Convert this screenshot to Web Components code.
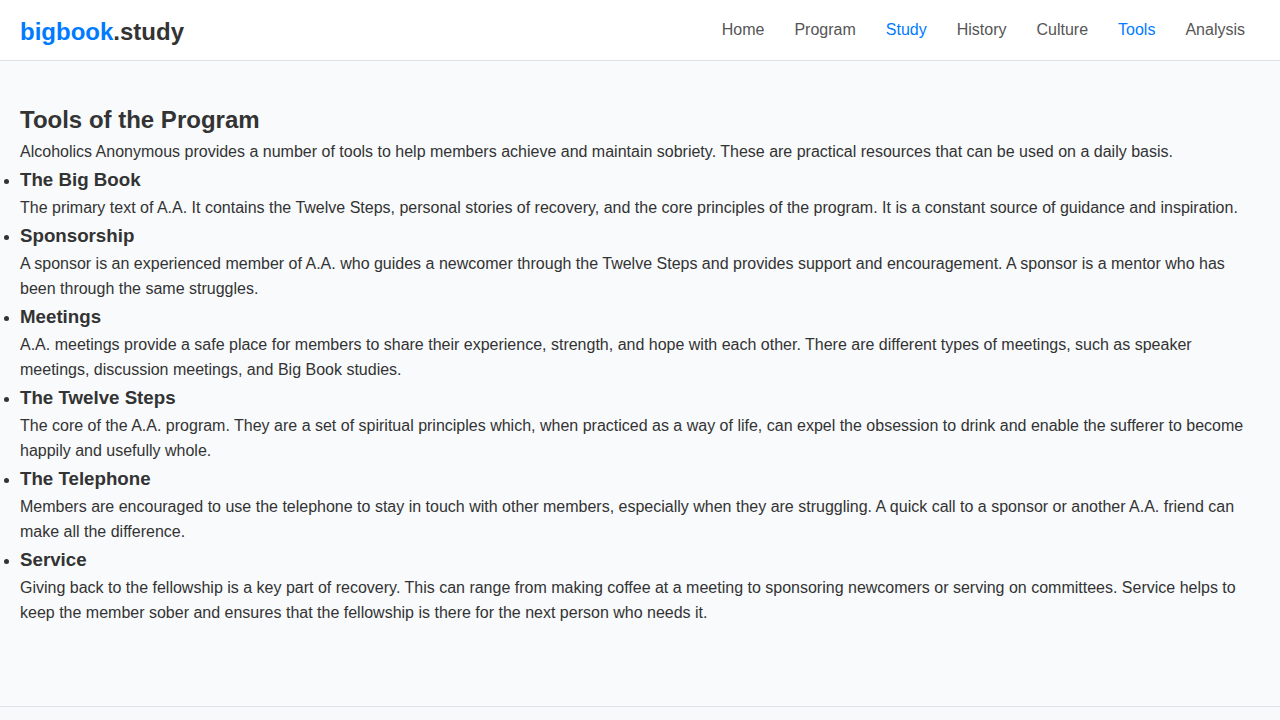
<!DOCTYPE html>
<html lang="en">
<head>
<meta charset="utf-8">
<meta name="viewport" content="width=device-width, initial-scale=1">
<title>Tools of the Program - bigbook.study</title>
<style>
  :root { --accent: #007bff; --ink: #333; --muted: #555; --line: #dee2e6; --page: #f8fafc; }
  body {
    margin: 0; min-height: 100vh; display: flex; flex-direction: column;
    background: var(--page); color: var(--ink);
    font: 16px/25px "Liberation Sans", Arial, sans-serif;
  }
</style>
</head>
<body>
<site-header>
  <nav-link href="#home">Home</nav-link>
  <nav-link href="#program">Program</nav-link>
  <nav-link href="#study" active>Study</nav-link>
  <nav-link href="#history">History</nav-link>
  <nav-link href="#culture">Culture</nav-link>
  <nav-link href="#tools" active>Tools</nav-link>
  <nav-link href="#analysis">Analysis</nav-link>
</site-header>
<page-section>
  <span slot="title">Tools of the Program</span>
  <span slot="intro">Alcoholics Anonymous provides a number of tools to help members achieve and maintain sobriety. These are practical resources that can be used on a daily basis.</span>
  <tool-item><span slot="name">The Big Book</span>The primary text of A.A. It contains the Twelve Steps, personal stories of recovery, and the core principles of the program. It is a constant source of guidance and inspiration.</tool-item>
  <tool-item><span slot="name">Sponsorship</span>A sponsor is an experienced member of A.A. who guides a newcomer through the Twelve Steps and provides support and encouragement. A sponsor is a mentor who has been through the same struggles.</tool-item>
  <tool-item><span slot="name">Meetings</span>A.A. meetings provide a safe place for members to share their experience, strength, and hope with each other. There are different types of meetings, such as speaker meetings, discussion meetings, and Big Book studies.</tool-item>
  <tool-item><span slot="name">The Twelve Steps</span>The core of the A.A. program. They are a set of spiritual principles which, when practiced as a way of life, can expel the obsession to drink and enable the sufferer to become happily and usefully whole.</tool-item>
  <tool-item><span slot="name">The Telephone</span>Members are encouraged to use the telephone to stay in touch with other members, especially when they are struggling. A quick call to a sponsor or another A.A. friend can make all the difference.</tool-item>
  <tool-item><span slot="name">Service</span>Giving back to the fellowship is a key part of recovery. This can range from making coffee at a meeting to sponsoring newcomers or serving on committees. Service helps to keep the member sober and ensures that the fellowship is there for the next person who needs it.</tool-item>
</page-section>
<site-footer></site-footer>

<script>
const define = (name, html, setup) => {
  const template = document.createElement('template');
  template.innerHTML = html;
  customElements.define(name, class extends HTMLElement {
    constructor() {
      super();
      this.attachShadow({ mode: 'open' }).append(template.content.cloneNode(true));
      if (setup) setup(this, this.shadowRoot);
    }
  });
};

define('site-header', `
  <style>
    :host { display: block; background: #fff; border-bottom: 1px solid var(--line); }
    header { display: flex; align-items: center; justify-content: space-between; min-height: 60px; padding: 0 20px; }
    h1 { margin: 0; padding-top: 3px; font-size: 24px; line-height: 39px; }
    a { color: inherit; text-decoration: none; }
    .brand { color: var(--accent); }
    nav { display: flex; gap: 30px; padding: 0 15px 2px; }
  </style>
  <header>
    <h1><a href="#home"><span class="brand">bigbook</span>.study</a></h1>
    <nav aria-label="Main"><slot></slot></nav>
  </header>`);

define('nav-link', `
  <style>
    :host { display: block; color: var(--muted); }
    :host([active]) { color: var(--accent); }
    a { color: inherit; text-decoration: none; }
  </style>
  <a><slot></slot></a>`,
  (host, root) => { root.querySelector('a').href = host.getAttribute('href'); });

define('page-section', `
  <style>
    :host { display: block; padding: 40px 20px 81px; }
    h2, p { margin: 0; }
    h2 { font-size: 24px; line-height: 38px; }
  </style>
  <main>
    <h2><slot name="title"></slot></h2>
    <p><slot name="intro"></slot></p>
    <div role="list"><slot></slot></div>
  </main>`);

define('tool-item', `
  <style>
    :host { display: list-item; list-style: disc outside; }
    h3, p { margin: 0; }
    h3 { line-height: 31px; }
  </style>
  <h3><slot name="name"></slot></h3>
  <p><slot></slot></p>`,
  host => { host.attachInternals().role = 'listitem'; });

define('site-footer', `
  <style>
    :host { display: block; flex: 1; background: #f8f9fa; border-top: 1px solid var(--line); }
  </style>
  <footer></footer>`);
</script>
</body>
</html>
